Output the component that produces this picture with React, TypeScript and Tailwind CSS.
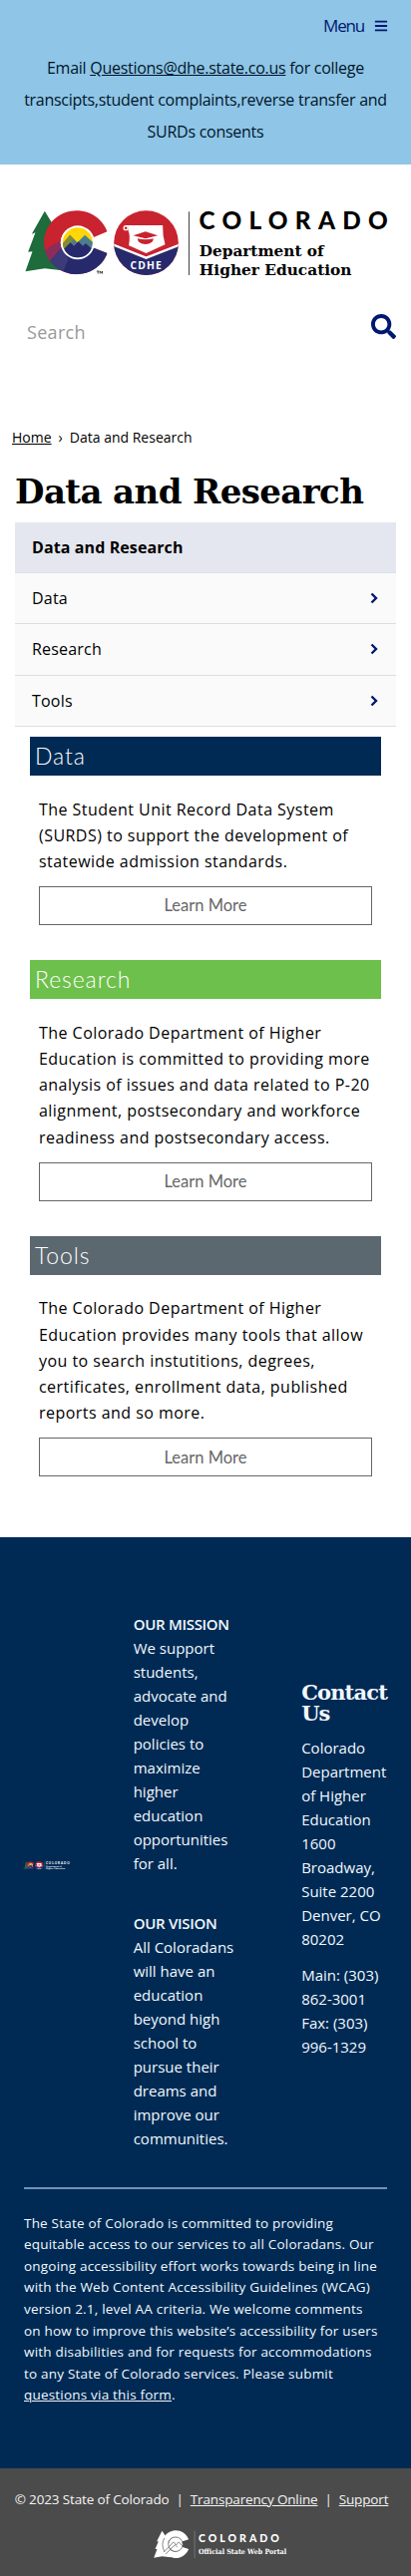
import React from "react";
import { FaBars, FaSearch } from "react-icons/fa";

const slab = "DejaVu Serif, serif";

function CMark() {
  return (
    <g>
      <path d="M134 95L160 138L152 136L178 185L168 182L205 276L134 268L76 277L97 217L84 218L106 160L95 164Z" fill="#1e6b3c" />
      <clipPath id="ring">
        <path d="M322 157A98 96 0 1 0 322 222L274 203A47 47 0 1 1 274 177Z" />
      </clipPath>
      <g clipPath="url(#ring)">
        <rect x="130" y="90" width="200" height="200" fill="#c8232f" />
        <path d="M196 190H345V300H120L152 244Z" fill="#262a6c" />
        <path d="M130 215L178 185L200 232L160 262L135 240Z" fill="#8d2c5b" />
        <path d="M148 247L184 205L205 240L190 276L160 262Z" fill="#3c3a78" />
      </g>
      <circle cx="233" cy="190" r="51" fill="#fff" />
      <clipPath id="sun">
        <circle cx="233" cy="190" r="45" />
      </clipPath>
      <g clipPath="url(#sun)">
        <rect x="180" y="140" width="110" height="52" fill="#ffd60a" />
        <path d="M180 202L210 167L232 190L255 167L292 202V240H180Z" fill="#4d7d8c" />
        <path d="M180 202L210 167L222 179L190 214Z" fill="#858b33" />
        <path d="M180 222L211 190L222 200L235 187L249 200L257 192L290 222V245H180Z" fill="#262a6c" />
      </g>
    </g>
  );
}

function Logo({ className, ink, accent, trademark = false }: { className: string; ink: string; accent: string; trademark?: boolean }) {
  return (
    <svg viewBox="72 90 1100 210" className={`overflow-visible ${className}`}>
      <CMark />
      {trademark && <path d="M290 276H298M294 276V284M300 284V276L303.500 281L307 276V284" fill="none" stroke={ink} strokeWidth="2" />}
      <clipPath id="badge">
        <circle cx="439" cy="191" r="97" />
      </clipPath>
      <g clipPath="url(#badge)">
        <rect x="340" y="90" width="200" height="200" fill="#c8232f" />
        <path d="M340 196L439 238L540 196V300H340Z" fill="#262a6c" />
        <path d="M338 196L439 236L542 196" fill="none" stroke="#fff" strokeWidth="7" />
      </g>
      <path d="M385 138H489Q488 168 496 196L439 222L387 199Q392 168 385 154Z" fill="#fff" />
      <circle cx="378" cy="146" r="6" fill="none" stroke="#fff" strokeWidth="4" />
      <path d="M375 140H400" stroke="#fff" strokeWidth="4" />
      <path d="M437 157L474 169L437 178L400 169Z" fill="#c8232f" />
      <path d="M413 178Q437 184 461 178Q460 194 437 195Q414 194 413 178Z" fill="#c8232f" />
      <text x="391" y="269" textLength="94" fontSize="31" fontWeight="700" fontFamily="Open Sans, sans-serif" fill="#fff">CDHE</text>
      <path d="M568 97V288" stroke={accent} strokeWidth="3" />
      <text x="598" y="150" textLength="568" fontSize="73" fontWeight="900" fontFamily="Lato, sans-serif" fill={ink}>COLORADO</text>
      <text x="599" y="231" textLength="374" lengthAdjust="spacingAndGlyphs" fontSize="46" fontWeight="700" fontFamily={slab} fill={ink}>Department of</text>
      <text x="599" y="288" textLength="458" lengthAdjust="spacingAndGlyphs" fontSize="46" fontWeight="700" fontFamily={slab} fill={ink}>Higher Education</text>
    </svg>
  );
}

function PortalLogo() {
  return (
    <svg viewBox="455 1070 412 94" className="h-[31px] w-[137px] overflow-visible">
      <path d="M485 1075L496 1092L492 1093L505 1115L512 1156L485 1153L460 1157L470 1131L464 1131L474 1107L469 1107Z" fill="#fff" />
      <path d="M566 1101A42 42 0 1 0 566 1131L545 1124A22 22 0 1 1 545 1108Z" fill="#fff" />
      <circle cx="526" cy="1116" r="22" fill="#fff" stroke="#4b4b4b" strokeWidth="2" />
      <path d="M506 1124L519 1109L528 1118L536 1109L546 1120M510 1132L524 1118L531 1124M490 1140L506 1124M496 1146L510 1132M492 1097Q481 1116 492 1138" fill="none" stroke="#4b4b4b" strokeWidth="2" />
      <path d="M584 1075V1158" stroke="#8a8a8a" strokeWidth="2" />
      <text x="596" y="1110" textLength="245" fontSize="32" fontWeight="900" fontFamily="Lato, sans-serif" fill="#fff">COLORADO</text>
      <text x="596" y="1145" textLength="267" lengthAdjust="spacingAndGlyphs" fontSize="22" fontWeight="700" fontFamily={slab} fill="#fff">Official State Web Portal</text>
    </svg>
  );
}

function Lines({ rows }: { rows: string[] }) {
  return (
    <>
      {rows.map((row) => (
        <span key={row} className="block whitespace-nowrap">{row}</span>
      ))}
    </>
  );
}

const sections = [
  {
    title: "Data",
    bar: "bg-[#002a54]",
    rows: ["The Student Unit Record Data System", "(SURDS) to support the development of", "statewide admission standards."],
  },
  {
    title: "Research",
    bar: "bg-[#6dc04b]",
    rows: [
      "The Colorado Department of Higher",
      "Education is committed to providing more",
      "analysis of issues and data related to P-20",
      "alignment, postsecondary and workforce",
      "readiness and postsecondary access.",
    ],
  },
  {
    title: "Tools",
    bar: "bg-[#5c6870]",
    rows: [
      "The Colorado Department of Higher",
      "Education provides many tools that allow",
      "you to search instutitions, degrees,",
      "certificates, enrollment data, published",
      "reports and so more.",
    ],
  },
];

export default function App() {
  return (
    <div className="flex h-[2584px] w-[412px] flex-col bg-white font-['Open_Sans',sans-serif] text-base text-black">
      <header className="flex h-[165px] flex-col bg-[#8fc5e6] pt-[13px]">
        <div className="flex h-[26px] items-center justify-end gap-[10px] pr-[23px] text-[#001970]">
          <span className="text-[17px] tracking-[-1.2px]">Menu</span>
          <FaBars size={14} />
        </div>
        <p className="mt-[13px] text-center leading-8 tracking-[-0.27px] text-[#00152b]">
          <span className="block">Email <a className="underline">Questions@dhe.state.co.us</a> for college</span>
          <span className="block">transcipts,student complaints,reverse transfer and</span>
          <span className="block">SURDs consents</span>
        </p>
      </header>

      <Logo className="mt-[45px] ml-6 h-[70px] w-[367px]" ink="#000" accent="#444" trademark />

      <div className="mt-[35px] flex h-[36px] justify-between pr-[15px] pl-[27px]">
        <span className="pt-[5px] text-[18px] leading-[26px] tracking-[0.3px] text-[#999]">Search</span>
        <FaSearch size={25} className="text-[#001970]" />
      </div>

      <nav className="mt-[78px] flex h-5 gap-[7px] pl-3 text-sm leading-5">
        <a className="underline">Home</a>
        <span>›</span>
        <span>Data and Research</span>
      </nav>

      <h1 className="mt-[24px] ml-[15px] text-[34px] leading-10 font-bold tracking-[-0.6px] whitespace-nowrap font-['DejaVu_Serif',serif]">Data and Research</h1>

      <ul className="mt-[11px] mr-[15px] ml-[15px]">
        <li className="flex h-[51.2px] items-center border-b border-[#dcdfe8] bg-[#e4e7ef] pl-[17px] font-bold tracking-[0.1px]">Data and Research</li>
        {["Data", "Research", "Tools"].map((name) => (
          <li key={name} className="flex h-[51.2px] items-center justify-between border-b border-[#dcdfe0] bg-[#fafafa] pr-[18px] pl-[17px] tracking-[0.2px]">
            {name}
            <svg viewBox="0 0 8 12" className="h-3 w-2 text-[#001970]">
              <path d="M1.500 1.500L6 6L1.500 10.500" fill="none" stroke="currentColor" strokeWidth="2.400" />
            </svg>
          </li>
        ))}
      </ul>

      <main className="mt-[10.5px] flex flex-col gap-[35.3px] px-[30px]">
        {sections.map((s) => (
          <section key={s.title}>
            <h2 className={`h-[39px] pl-[5px] text-[23px] leading-[39px] font-light tracking-[0.9px] text-white font-['Lato',sans-serif] ${s.bar}`}>{s.title}</h2>
            <p className="mt-[20.3px] pl-[9px] leading-[26.2px] tracking-[0.46px]">
              <Lines rows={s.rows} />
            </p>
            <button className="mx-[9px] mt-3 block h-[39px] w-[334px] border border-[#666] text-[16.5px] text-[#666] font-['Lato',sans-serif]">Learn More</button>
          </section>
        ))}
      </main>

      <footer className="mt-[60.300px] flex h-[934px] flex-col bg-[#002a54] px-6 text-[#f2f8fd]">
        <div className="flex h-[652px] text-[15px] leading-6">
          <div className="w-[110px] pt-[325px]">
            <Logo className="h-[9px] w-[46px]" ink="#fff" accent="#fff" />
          </div>
          <div className="w-[169px] pt-[75.5px]">
            <p>
              <strong className="block font-semibold tracking-[-0.3px]">OUR MISSION</strong>
              <Lines rows={["We support", "students,", "advocate and", "develop", "policies to", "maximize", "higher", "education", "opportunities", "for all."]} />
            </p>
            <p className="mt-9">
              <strong className="block font-semibold tracking-[-0.3px]">OUR VISION</strong>
              <Lines rows={["All Coloradans", "will have an", "education", "beyond high", "school to", "pursue their", "dreams and", "improve our", "communities."]} />
            </p>
          </div>
          <div className="pt-[145px]">
            <h3 className="text-[21px] leading-[21.5px] font-bold tracking-[-0.85px] font-['DejaVu_Serif',serif]">
              <Lines rows={["Contact", "Us"]} />
            </h3>
            <p className="mt-[11.5px]">
              <Lines rows={["Colorado", "Department", "of Higher", "Education", "1600", "Broadway,", "Suite 2200", "Denver, CO", "80202"]} />
            </p>
            <p className="mt-3">
              <Lines rows={["Main: (303)", "862-3001", "Fax: (303)", "996-1329"]} />
            </p>
          </div>
        </div>
        <hr className="h-[2px] w-[364px] border-0 bg-[#6f94b8]" />
        <p className="mt-6 text-[13.5px] leading-[21.6px] tracking-[0.2px]">
          <Lines
            rows={[
              "The State of Colorado is committed to providing",
              "equitable access to our services to all Coloradans. Our",
              "ongoing accessibility effort works towards being in line",
              "with the Web Content Accessibility Guidelines (WCAG)",
              "version 2.1, level AA criteria. We welcome comments",
              "on how to improve this website’s accessibility for users",
              "with disabilities and for requests for accommodations",
              "to any State of Colorado services. Please submit",
            ]}
          />
          <a className="underline">questions via this form</a>.
        </p>
      </footer>

      <div className="flex h-[108px] flex-col items-center bg-[#4b4b4b] text-[13.5px] text-[#f4f4f4]">
        <p className="mt-[21px] mr-2 flex gap-[7px] leading-5 tracking-[-0.15px] whitespace-nowrap">
          <span>© 2023 State of Colorado</span>
          <span>|</span>
          <a className="underline">Transparency Online</a>
          <span>|</span>
          <a className="underline">Support</a>
        </p>
        <div className="mt-5 -mr-7">
          <PortalLogo />
        </div>
      </div>
    </div>
  );
}
